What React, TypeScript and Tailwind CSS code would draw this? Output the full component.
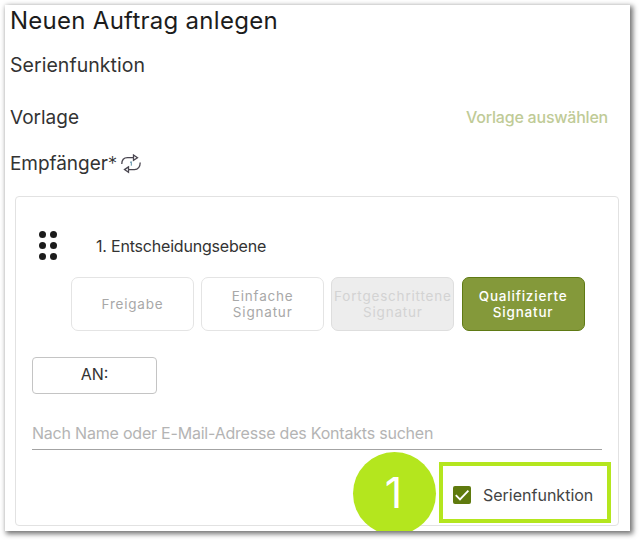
import React from 'react';
import clsx from 'clsx';

const LEVELS = [
  { id: 'freigabe', lines: ['Freigabe'], style: 'bg-white border-[#e4e4e4] text-[#a8a8a8]' },
  { id: 'einfach', lines: ['Einfache', 'Signatur'], style: 'bg-white border-[#e4e4e4] text-[#a8a8a8]' },
  { id: 'fortgeschritten', lines: ['Fortgeschrittene', 'Signatur'], style: 'bg-[#ededed] border-[#dedede] text-[#d3d3d3]' },
  { id: 'qualifiziert', lines: ['Qualifizierte', 'Signatur'], style: 'bg-[#84993a] border-[#5f7a14] text-white font-medium' },
];

const SeriesIcon: React.FC = () => (
  <svg width="20" height="20" viewBox="0 0 20 20" fill="none" stroke="#4a4650" strokeWidth="1.3">
    <path d="M.8 10C.8 6.200 3 3.700 6.500 3.700H12.500" />
    <path d="M12.500 1L16.500 3.700L12.500 6.400Z" />
    <path d="M19.200 8.500C19.200 12.500 17 15.600 13.500 15.600H7.500" />
    <path d="M7.500 12.900L3.500 15.600L7.500 18.300Z" />
    <path d="M9 8.500L10.300 7.700V11.700" stroke="#5b8ea6" strokeWidth="1" />
  </svg>
);

const DragHandle: React.FC = () => (
  <div className="mb-[2px] grid grid-cols-[7px_7px] gap-x-1 gap-y-[4px]">
    {[0, 1, 2, 3, 4, 5].map((dot) => (
      <span key={dot} className="size-[7px] rounded-full bg-[#1c1c1c]" />
    ))}
  </div>
);

const App: React.FC = () => {
  return (
    <div className="h-[540px] w-[639px] overflow-hidden bg-white p-[5px] font-['Inter',sans-serif] text-[#333]">
      <main className="relative h-[526px] w-[625px] bg-white shadow-[2px_2px_5px_1px_rgba(0,0,0,0.55)]">
        <div className="relative flex h-full flex-col overflow-hidden pl-[10px]">
          <h1 className="h-[32px] -ml-[5px] whitespace-nowrap text-[24px] leading-[31px] tracking-[0.27px] text-[#1c1c1c]">Neuen Auftrag anlegen</h1>
          <h2 className="mt-[13px] h-[32px] -ml-[5px] text-[19.5px] leading-[31px] tracking-[0.05px]">Serienfunktion</h2>
          <div className="-ml-[5px] mt-[20px] flex h-[32px] items-center justify-between pr-[22px]">
            <span className="text-[19px]">Vorlage</span>
            <button className="pb-[2px] text-[16px] font-medium tracking-[-0.22px] text-[#bfcb97]">Vorlage auswählen</button>
          </div>
          <div className="-ml-[5px] mt-[14px] flex h-[32px] items-center gap-[4px]">
            <span className="text-[19px] tracking-[-0.05px]">Empfänger<span className="font-light">*</span></span>
            <SeriesIcon />
          </div>

          <section className="mt-[16px] flex h-[330px] w-[604px] shrink-0 flex-col rounded-[4px] border border-[#e2e2e2] px-4">
            <div className="mt-[32px] flex h-[34px] shrink-0 items-center pl-[7px]">
              <DragHandle />
              <span className="ml-[39px] pb-[1px] text-[16px] tracking-[-0.2px]">1. Entscheidungsebene</span>
            </div>

            <div className="ml-[39px] mt-[14px] flex shrink-0 gap-[7.200px]">
              {LEVELS.map((level) => (
                <button
                  key={level.id}
                  className={clsx(
                    'flex h-[54px] w-[123px] shrink-0 flex-col items-center justify-center whitespace-nowrap rounded-[7px] border text-[13.5px] leading-[16px] tracking-[0.8px]',
                    level.style,
                  )}
                >
                  {level.lines.map((line) => (
                    <span key={line}>{line}</span>
                  ))}
                </button>
              ))}
            </div>

            <button className="mt-[26px] h-[37px] w-[125px] shrink-0 rounded-[4px] border border-[#c4c4c4] pb-[4px] text-[16px]">AN:</button>

            <input
              className="mt-[20px] h-[36px] w-[570px] shrink-0 border-b border-[#a3a3a3] pt-[2px] text-[16px] tracking-[-0.21px] placeholder:text-[#b4b4b4]"
              placeholder="Nach Name oder E-Mail-Adresse des Kontakts suchen"
            />

            <div className="-mr-[9px] mt-[2px] flex h-[74px] shrink-0 items-start justify-end gap-[3px]">
              <div className="flex size-[83px] shrink-0 items-center justify-center rounded-full bg-[#b4e61e] pb-[2px] pr-[2px] text-[43px] font-normal text-white">1</div>
              <label className="mt-[10px] flex h-[61px] w-[172px] shrink-0 items-center border-4 border-[#b4e61e] pl-[10px] pt-[5px] text-[16px] text-[#444]">
                <svg width="18" height="18" viewBox="0 0 18 18" className="mr-[12px] shrink-0">
                  <rect width="18" height="18" rx="2" fill="#5f7a0e" />
                  <path d="M2.800 9.200L7 13.400L15.400 4.700" fill="none" stroke="white" strokeWidth="1.9" />
                </svg>
                Serienfunktion
              </label>
            </div>
          </section>
        </div>
      </main>
    </div>
  );
};

export default App;
